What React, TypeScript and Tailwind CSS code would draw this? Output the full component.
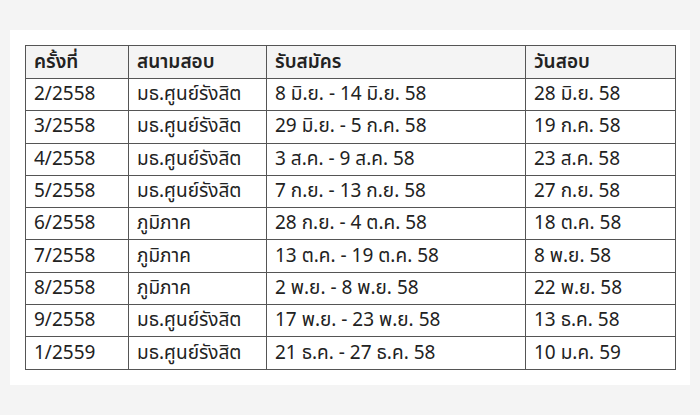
const rows = [
  ["2/2558", "มธ.ศูนย์รังสิต", "8 มิ.ย. - 14 มิ.ย. 58", "28 มิ.ย. 58"],
  ["3/2558", "มธ.ศูนย์รังสิต", "29 มิ.ย. - 5 ก.ค. 58", "19 ก.ค. 58"],
  ["4/2558", "มธ.ศูนย์รังสิต", "3 ส.ค. - 9 ส.ค. 58", "23 ส.ค. 58"],
  ["5/2558", "มธ.ศูนย์รังสิต", "7 ก.ย. - 13 ก.ย. 58", "27 ก.ย. 58"],
  ["6/2558", "ภูมิภาค", "28 ก.ย. - 4 ต.ค. 58", "18 ต.ค. 58"],
  ["7/2558", "ภูมิภาค", "13 ต.ค. - 19 ต.ค. 58", "8 พ.ย. 58"],
  ["8/2558", "ภูมิภาค", "2 พ.ย. - 8 พ.ย. 58", "22 พ.ย. 58"],
  ["9/2558", "มธ.ศูนย์รังสิต", "17 พ.ย. - 23 พ.ย. 58", "13 ธ.ค. 58"],
  ["1/2559", "มธ.ศูนย์รังสิต", "21 ธ.ค. - 27 ธ.ค. 58", "10 ม.ค. 59"],
];

const headers = ["ครั้งที่", "สนามสอบ", "รับสมัคร", "วันสอบ"];
const widths = ["w-[103px]", "w-[138px]", "w-[259px]", "w-[150px]"];

export default function App() {
  return (
    <div className="w-[700px] h-[415px] bg-[#f4f4f4] pt-[30px] px-[10px] font-['Noto_Sans_Thai','Noto_Sans',sans-serif] text-[#222]">
      <div className="bg-white h-[355px] pt-[15px] px-[15px]">
        <table className="border-collapse table-fixed w-[650px] text-[19px] leading-none">
          <thead>
            <tr className="h-[33px] bg-[#f4f4f4]">
              {headers.map((h, i) => (
                <th
                  key={h}
                  className={`${widths[i]} border border-[#555] px-2 text-left font-semibold`}
                >
                  {h}
                </th>
              ))}
            </tr>
          </thead>
          <tbody>
            {rows.map((r) => (
              <tr key={r[0]} className="h-[32.3px]">
                {r.map((c, i) => (
                  <td key={i} className="border border-[#555] px-2 font-normal">
                    {c}
                  </td>
                ))}
              </tr>
            ))}
          </tbody>
        </table>
      </div>
    </div>
  );
}
